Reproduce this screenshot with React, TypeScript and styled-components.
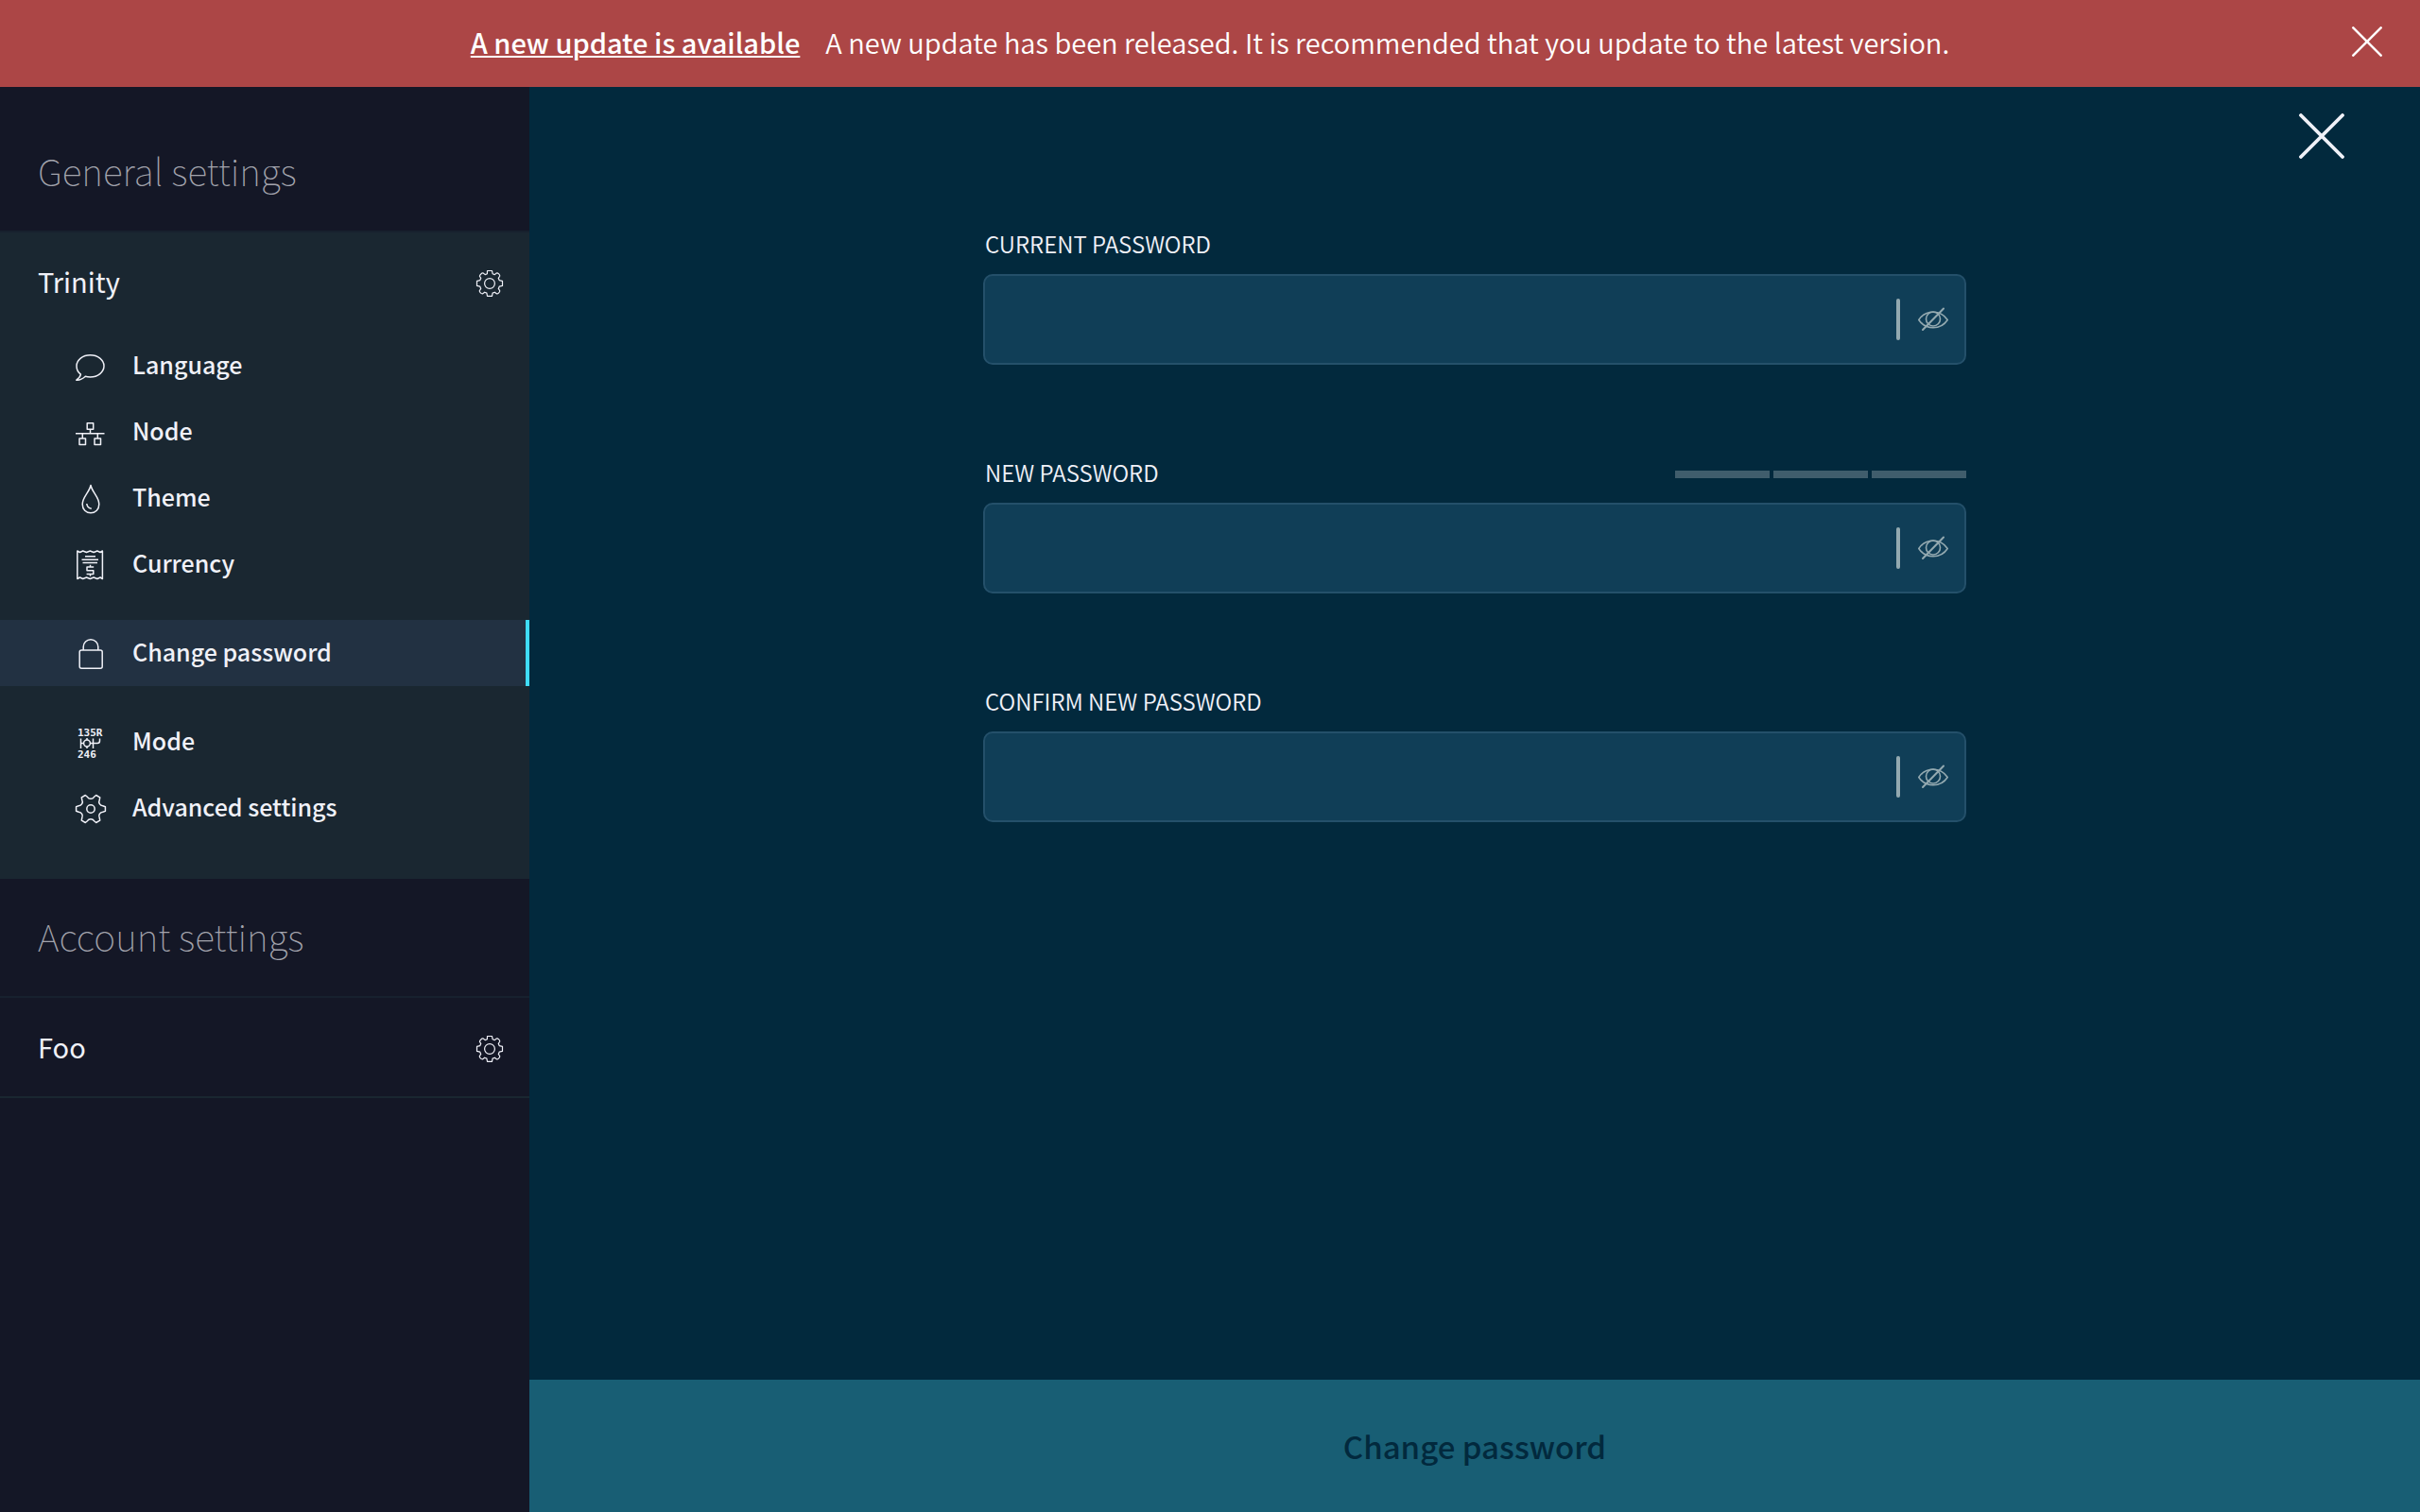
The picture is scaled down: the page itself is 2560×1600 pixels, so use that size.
import React, { useState } from 'react';
import styled, { createGlobalStyle } from 'styled-components';

const GlobalStyle = createGlobalStyle`
  *, *::before, *::after { box-sizing: border-box; }
  body { margin: 0; }
  body, button, input {
    font-family: "Noto Sans CJK SC", "Source Sans Pro", "Noto Sans", sans-serif;
  }
`;

const Page = styled.div`
  display: flex;
  flex-direction: column;
  min-height: 100vh;
  color: #f0f1f8;
  background: #02293d;
`;

const Banner = styled.header`
  display: flex;
  align-items: center;
  justify-content: space-between;
  height: 92px;
  padding: 0 40px 4px;
  color: #fff;
  background: #ac4646;
  font-size: 29px;
  font-weight: 350;
  line-height: 44px;
`;

const BannerSpacer = styled.span`
  width: 32px;
`;

const BannerText = styled.p`
  display: flex;
  gap: 27px;
  margin: 0;
`;

const BannerLink = styled.a`
  color: inherit;
  font-weight: 500;
  text-decoration: underline;
  text-decoration-thickness: 2px;
  text-underline-offset: 2px;
`;

const IconButton = styled.button`
  display: flex;
  padding: 0;
  border: 0;
  color: inherit;
  background: none;
  cursor: pointer;
`;

const Body = styled.div`
  display: flex;
  flex: 1;
`;

const Sidebar = styled.nav`
  flex: none;
  width: 560px;
  padding-top: 28px;
  background: #141726;
`;

const SectionTitle = styled.h2`
  margin: 0;
  padding: 30px 40px 34px;
  color: #a3a4ad;
  font-size: 39px;
  font-weight: 100;
  line-height: 60px;
`;

const Group = styled.section<{ $open?: boolean }>`
  border-top: 2px solid #17212e;
  border-bottom: ${(p) => (p.$open ? '0' : '2px solid #1a2731')};
  padding-bottom: ${(p) => (p.$open ? '40px' : '0')};
  background: ${(p) => (p.$open ? '#1a2731' : 'transparent')};
`;

const GroupHeader = styled.button<{ $open?: boolean }>`
  display: flex;
  align-items: center;
  justify-content: space-between;
  width: 100%;
  height: ${(p) => (p.$open ? '106px' : '104px')};
  padding: ${(p) => (p.$open ? '2px' : '4px')} 26px 0 40px;
  border: 0;
  color: inherit;
  background: none;
  font-size: 29px;
  line-height: 44px;
  cursor: pointer;
`;

const RowText = styled.span`
  padding-bottom: 6px;
`;

const Items = styled.ul`
  margin: 0;
  padding: 0;
  list-style: none;
`;

const Item = styled.li<{ $active?: boolean }>`
  margin: ${(p) => (p.$active ? '24px 0' : '0')};
  border-right: ${(p) => (p.$active ? '4px solid #3fdcf8' : '0')};
  background: ${(p) => (p.$active ? '#223142' : 'transparent')};
`;

const ItemLink = styled.a`
  display: flex;
  align-items: center;
  gap: 28px;
  height: 70px;
  padding: 2px 40px 0 80px;
  color: inherit;
  font-size: 25px;
  font-weight: 500;
  line-height: 40px;
  text-decoration: none;
`;

const Main = styled.main`
  display: flex;
  flex: 1;
  flex-direction: column;
`;

const Toolbar = styled.div`
  display: flex;
  justify-content: flex-end;
  padding: 28px 80px 0;
`;

const Form = styled.form`
  display: flex;
  flex: 1;
  flex-direction: column;
`;

const Fields = styled.div`
  display: flex;
  flex: 1;
  flex-direction: column;
  gap: 92px;
  width: 52%;
  margin: 0 auto;
  padding-top: 68px;
`;

const FieldHead = styled.div`
  display: flex;
  align-items: center;
  justify-content: space-between;
  height: 54px;
  padding-bottom: 6px;
`;

const FieldLabel = styled.label`
  padding: 0 0 4px 2px;
  font-size: 24px;
  font-weight: 350;
  line-height: 36px;
  text-transform: uppercase;
`;

const Strength = styled.div`
  display: flex;
  gap: 4px;
`;

const StrengthBar = styled.span`
  width: 100px;
  height: 8px;
  background: #405d6c;
`;

const InputBox = styled.div`
  display: flex;
  align-items: center;
  height: 96px;
  padding-right: 17px;
  border: 2px solid #24506a;
  border-radius: 10px;
  background: #103e57;
`;

const PasswordInput = styled.input`
  flex: 1;
  min-width: 0;
  height: 92px;
  padding: 0 32px;
  border: 0;
  outline: 0;
  color: #f0f1f8;
  background: none;
  font-size: 29px;
`;

const Divider = styled.span`
  width: 4px;
  height: 44px;
  margin-right: 19px;
  border-radius: 2px;
  background: #93a9b0;
`;

const EyeButton = styled(IconButton)`
  color: #93a9b0;
`;

const SubmitButton = styled.button`
  height: 140px;
  border: 0;
  color: #02293d;
  background: #185e74;
  font-size: 33px;
  font-weight: 500;
  line-height: 48px;
`;

const Cross = ({ size }: { size: number }) => (
  <svg width={size} height={size} viewBox="0 0 48 48" fill="none" stroke="currentColor" strokeWidth="3.8" strokeLinecap="round" aria-hidden="true">
    <path d="M2 2 46 46M46 2 2 46" />
  </svg>
);

const Eye = () => (
  <svg width="32" height="26" viewBox="0 0 32 26" fill="none" stroke="currentColor" strokeWidth="1.6" strokeLinecap="round" aria-hidden="true">
    <path d="M.8 13.500C8 2.500 24 2.500 31.200 13.500 24 24.500 8 24.500 .8 13.500Z" />
    <circle cx="16" cy="12.500" r="7.500" />
    <path d="M5 24 27 1.500" strokeWidth="2" />
  </svg>
);

const gearPath = (teeth: number, outer: number, inner: number, top: number, base: number, valley: number) => {
  const point = (r: number, a: number) => `${(16 + r * Math.sin(a)).toFixed(2)} ${(16 - r * Math.cos(a)).toFixed(2)}`;
  const step = (Math.PI * 2) / teeth;
  let d = '';
  for (let i = 0; i < teeth; i += 1) {
    const a = i * step;
    d += `${i ? 'L' : 'M'}${point(inner, a - base)}L${point(outer, a - top)}L${point(outer, a + top)}L${point(inner, a + base)}`;
    d += `A${valley} ${valley} 0 0 0 ${point(inner, a + step - base)}`;
  }
  return `${d}Z`;
};

const Cog = () => (
  <svg width="32" height="32" viewBox="0 0 32 32" fill="none" stroke="currentColor" strokeWidth="1.2" strokeLinejoin="round" aria-hidden="true">
    <path d="M13.500 2.500h5l.6 3.200 2.200.9 2-1.600c1.300-.6 3.900 2 3.300 3.300l-1.300 2.100.9 2.200 3.300.8v5l-3.300.8-.9 2.200 1.300 2.100c.6 1.300-2 3.900-3.300 3.300l-2-1.600-2.200.9-.6 3.200h-5l-.6-3.200-2.200-.9-2 1.600c-1.300.6-3.900-2-3.300-3.300l1.300-2.100-.9-2.200-3.300-.8v-5l3.300-.8.9-2.200-1.300-2.100C5.300 7 7.900 4.400 9.200 5l2 1.600 2.200-.9Z" />
    <circle cx="16" cy="16" r="5.400" />
  </svg>
);

const ItemIcon = ({ children }: { children: React.ReactNode }) => (
  <svg width="32" height="32" viewBox="0 0 32 32" fill="none" stroke="currentColor" strokeWidth="1.5" strokeLinejoin="round" overflow="visible" aria-hidden="true">
    {children}
  </svg>
);

const icons: Record<string, React.ReactNode> = {
  language: (
    <ItemIcon>
      <path d="M15.500 3.800c8 0 14.500 5 14.500 11.500S23.500 27 15.500 27c-1.800 0-3.600-.2-5.200-.7C8 28.500 4 30.500.8 30.200c2.400-1.500 4-3.300 4.600-6C2.500 22 1 18.800 1 15.300 1 8.800 7.500 3.800 15.500 3.800Z" />
    </ItemIcon>
  ),
  node: (
    <ItemIcon>
      <path d="M12.200 5.700h6.500v6.500h-6.500zM4 22h6.500v6.500H4zM20 22h6.500v6.500H20zM0 16.800h30.500M15.500 12.200v4.600M7.300 17v5M23.300 17v5" />
    </ItemIcon>
  ),
  theme: (
    <ItemIcon>
      <path d="M16 1.500C14.500 9 7.200 14 7.200 21.500c0 5.500 3.800 9.300 8.800 9.300s8.800-3.800 8.800-9.300C24.800 14 17.500 9 16 1.500Z" />
      <path d="M11.800 21c.2 3 2 4.800 5 5.200" />
    </ItemIcon>
  ),
  currency: (
    <ItemIcon>
      <path d="M1.800 1v29.500l2.700-1.500 3.200 1.500 3.800-1.500 3.800 1.500 3.800-1.500 3.800 1.500 3.200-1.500 2.300 1.500V1L26.100 2.500l-3.200-1.500L19.100 2.500l-3.800-1.500L11.500 2.500 7.700 1 4.500 2.500Z" />
      <path d="M10 6.700h11M6.500 10.200h17.500M7.500 13.400h15.500M19.200 18h-7.200v3.700h6.800v3.800h-7.200M15.500 15.800v2.200M15.500 25.500v2.200" />
    </ItemIcon>
  ),
  password: (
    <ItemIcon>
      <rect x="4.200" y="12" width="24" height="19.200" rx="2" />
      <path d="M8.200 12V8.500a7.800 7.800 0 0 1 15.600 0V12" />
    </ItemIcon>
  ),
  mode: (
    <ItemIcon>
      <g fill="currentColor" stroke="none" fontFamily="DejaVu Sans Mono, monospace" fontSize="11" fontWeight="700">
        <text x="2" y="9">135R</text>
        <text x="2" y="32">246</text>
      </g>
      <circle cx="12" cy="16.500" r="3.400" />
      <path d="M5.500 11.500v10.500M5.500 16.500h3M15.400 16.500H23q2.500 0 2.500-2.500V11.500M12 11v2M12 20v2M18.500 11.500v10.500" />
    </ItemIcon>
  ),
  advanced: (
    <ItemIcon>
      <path d={gearPath(6, 15.6, 13.2, 0.15, 0.25, 4.2)} transform="rotate(30 16 16)" />
      <circle cx="16" cy="16" r="4.200" />
    </ItemIcon>
  ),
};

const items = [
  { id: 'language', label: 'Language' },
  { id: 'node', label: 'Node' },
  { id: 'theme', label: 'Theme' },
  { id: 'currency', label: 'Currency' },
  { id: 'password', label: 'Change password', active: true },
  { id: 'mode', label: 'Mode' },
  { id: 'advanced', label: 'Advanced settings' },
];

const PasswordField = ({ id, label, strength }: { id: string; label: string; strength?: boolean }) => {
  const [visible, setVisible] = useState(false);
  return (
    <div>
      <FieldHead>
        <FieldLabel htmlFor={id}>{label}</FieldLabel>
        {strength && (
          <Strength>
            <StrengthBar />
            <StrengthBar />
            <StrengthBar />
          </Strength>
        )}
      </FieldHead>
      <InputBox>
        <PasswordInput id={id} type={visible ? 'text' : 'password'} />
        <Divider />
        <EyeButton type="button" aria-label="Toggle password visibility" onClick={() => setVisible(!visible)}>
          <Eye />
        </EyeButton>
      </InputBox>
    </div>
  );
};

export default function App() {
  return (
    <Page>
      <GlobalStyle />
      <Banner>
        <BannerSpacer />
        <BannerText>
          <BannerLink href="#update">A new update is available</BannerLink>
          <span>A new update has been released. It is recommended that you update to the latest version.</span>
        </BannerText>
        <IconButton type="button" aria-label="Dismiss">
          <Cross size={32} />
        </IconButton>
      </Banner>
      <Body>
        <Sidebar>
          <SectionTitle>General settings</SectionTitle>
          <Group $open>
            <GroupHeader type="button" $open>
              <RowText>Trinity</RowText>
              <Cog />
            </GroupHeader>
            <Items>
              {items.map((item) => (
                <Item key={item.id} $active={item.active}>
                  <ItemLink href={`#${item.id}`}>
                    {icons[item.id]}
                    <RowText>{item.label}</RowText>
                  </ItemLink>
                </Item>
              ))}
            </Items>
          </Group>
          <SectionTitle>Account settings</SectionTitle>
          <Group>
            <GroupHeader type="button">
              <RowText>Foo</RowText>
              <Cog />
            </GroupHeader>
          </Group>
        </Sidebar>
        <Main>
          <Toolbar>
            <IconButton type="button" aria-label="Close settings">
              <Cross size={48} />
            </IconButton>
          </Toolbar>
          <Form onSubmit={(e) => e.preventDefault()}>
            <Fields>
              <PasswordField id="current" label="Current password" />
              <PasswordField id="new" label="New password" strength />
              <PasswordField id="confirm" label="Confirm new password" />
            </Fields>
            <SubmitButton type="submit" disabled>
              Change password
            </SubmitButton>
          </Form>
        </Main>
      </Body>
    </Page>
  );
}
